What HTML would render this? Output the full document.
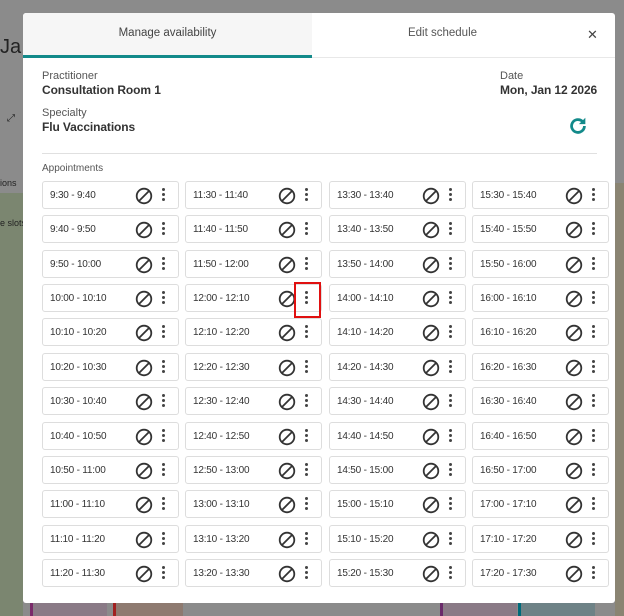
<!DOCTYPE html>
<html><head><style>
*{box-sizing:border-box;margin:0;padding:0}
body{width:624px;height:616px;overflow:hidden;background:#8b8b8b;font-family:"Liberation Sans",sans-serif;position:relative}
.bg{position:absolute}
.modal{position:absolute;left:23px;top:13px;width:592px;height:590px;background:#fff;border-radius:3px}
.tabs{position:absolute;left:0;top:0;width:592px;height:45px;border-bottom:1px solid #e8e8e8}
.tab1{position:absolute;left:0;top:0;width:289px;height:45px;background:#f6f6f6;border-bottom:3px solid #138a8a;font-size:11.5px;color:#444;text-align:center;line-height:40px;border-top-left-radius:3px}
.tab2{position:absolute;left:289px;top:0;width:261px;height:44px;font-size:11.5px;color:#555;text-align:center;line-height:40px}
.x{position:absolute;left:564px;top:14px;font-size:13px;color:#444}
.lbl{position:absolute;font-size:11px;color:#555}
.val{position:absolute;font-size:12px;font-weight:bold;color:#333;letter-spacing:-0.1px}
.hr{position:absolute;left:19px;top:140px;width:555px;height:1px;background:#e0e0e0}
.cell{position:absolute;width:137px;height:28px;border:1px solid #ddd;border-radius:3px;font-size:10px;color:#333;line-height:28px;padding-left:7px;letter-spacing:-0.2px}
.cell svg{position:absolute;right:25px;top:5px}
.dots{position:absolute;right:13px;top:6px;width:3px}
.dots i{display:block;width:3px;height:3px;border-radius:50%;background:#444;margin-bottom:2px}
</style></head><body>
<div class="bg" style="left:0;top:193px;width:23px;height:423px;background:#7b8670"></div>
<div class="bg" style="left:615px;top:183px;width:9px;height:433px;background:#8a8472"></div>
<div class="bg" style="left:0;top:36px;width:23px;font-size:20px;color:#222;">Ja</div>
<div class="bg" style="left:0;top:178px;font-size:9px;color:#222">ions</div>
<div class="bg" style="left:0;top:218px;font-size:9px;color:#222">e slots</div>
<div class="bg" style="left:7px;top:113px;font-size:10px;color:#222">⤢</div>
<div class="bg" style="left:30px;top:603px;width:77px;height:13px;background:#8a7a86;border-left:3px solid #7a2a6a"></div>
<div class="bg" style="left:113px;top:603px;width:70px;height:13px;background:#8e7a70;border-left:3px solid #a02020"></div>
<div class="bg" style="left:440px;top:603px;width:77px;height:13px;background:#8a7a86;border-left:3px solid #6a2a6a"></div>
<div class="bg" style="left:518px;top:603px;width:77px;height:13px;background:#6e8286;border-left:3px solid #006a7a"></div>
<div class="modal">
<div class="tabs"><div class="tab1">Manage availability</div><div class="tab2">Edit schedule</div><div class="x">✕</div></div>
<div class="lbl" style="left:19px;top:57px">Practitioner</div>
<div class="val" style="left:19px;top:70px">Consultation Room 1</div>
<div class="lbl" style="left:19px;top:94px">Specialty</div>
<div class="val" style="left:19px;top:107px">Flu Vaccinations</div>
<div class="lbl" style="left:477px;top:57px">Date</div>
<div class="val" style="left:477px;top:70px">Mon, Jan 12 2026</div>
<svg style="position:absolute;left:544px;top:102px" width="22" height="22" viewBox="0 0 24 24"><path d="M19 12a7 7 0 1 1-2.1-5" fill="none" stroke="#138a8a" stroke-width="3"/><path d="M20 3v7h-7z" fill="#138a8a"/></svg>
<div class="hr"></div>
<div class="lbl" style="left:19px;top:150px;font-size:10px">Appointments</div>
<div id="g"></div>
</div>
<div class="bg" style="left:294px;top:282px;width:27px;height:36px;border:2px solid #e01010"></div>
<script>
var cols=[["9:30 - 9:40","9:40 - 9:50","9:50 - 10:00","10:00 - 10:10","10:10 - 10:20","10:20 - 10:30","10:30 - 10:40","10:40 - 10:50","10:50 - 11:00","11:00 - 11:10","11:10 - 11:20","11:20 - 11:30"],
["11:30 - 11:40","11:40 - 11:50","11:50 - 12:00","12:00 - 12:10","12:10 - 12:20","12:20 - 12:30","12:30 - 12:40","12:40 - 12:50","12:50 - 13:00","13:00 - 13:10","13:10 - 13:20","13:20 - 13:30"],
["13:30 - 13:40","13:40 - 13:50","13:50 - 14:00","14:00 - 14:10","14:10 - 14:20","14:20 - 14:30","14:30 - 14:40","14:40 - 14:50","14:50 - 15:00","15:00 - 15:10","15:10 - 15:20","15:20 - 15:30"],
["15:30 - 15:40","15:40 - 15:50","15:50 - 16:00","16:00 - 16:10","16:10 - 16:20","16:20 - 16:30","16:30 - 16:40","16:40 - 16:50","16:50 - 17:00","17:00 - 17:10","17:10 - 17:20","17:20 - 17:30"]];
var xs=[19,162,306,449],h="";
for(var c=0;c<4;c++)for(var r=0;r<12;r++){
h+='<div class="cell" style="left:'+xs[c]+'px;top:'+(168+r*34.36).toFixed(1)+'px">'+cols[c][r]+'<svg width="18" height="18" viewBox="0 0 18 18"><circle cx="9" cy="9" r="7.3" fill="none" stroke="#333" stroke-width="1.8"/><path d="M4 14L14 4" stroke="#333" stroke-width="1.8"/></svg><div class="dots"><i></i><i></i><i></i></div></div>';}
document.getElementById("g").innerHTML=h;
</script>
</body></html>
